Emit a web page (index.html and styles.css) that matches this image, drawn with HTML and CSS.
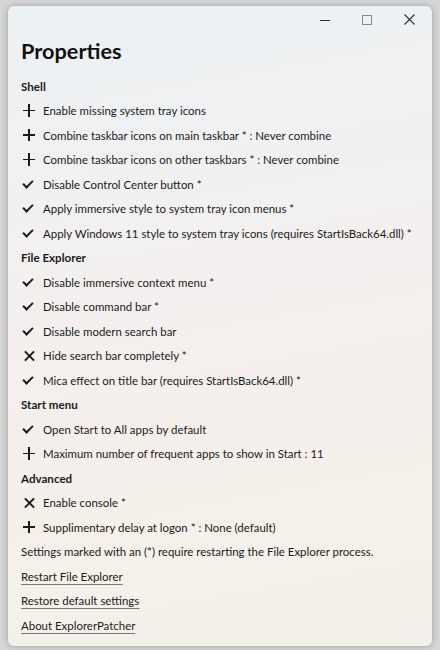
FILE: index.html
```html
<!DOCTYPE html>
<html>
<head>
<meta charset="utf-8">
<link rel="stylesheet" href="styles.css">
</head>
<body>
<div class="window">
  <div class="titlebar">
    <span class="cap"><svg width="10" height="10" viewBox="0 0 10 10"><path d="M0 5.5h10" stroke="#333" stroke-width="1"/></svg></span>
    <span class="cap"><svg width="10" height="10" viewBox="0 0 10 10"><rect x="0.5" y="0.5" width="9" height="9" fill="none" stroke="#888" stroke-width="1"/></svg></span>
    <span class="cap"><svg width="11" height="11" viewBox="0 0 11 11"><path d="M0.5 0.5L10.5 10.5M10.5 0.5L0.5 10.5" stroke="#333" stroke-width="1.1"/></svg></span>
  </div>
  <h1 class="title">Properties</h1>
  <div class="list">
    <div class="row head">Shell</div>
    <div class="row"><span class="ic plus"></span>Enable missing system tray icons</div>
    <div class="row"><span class="ic plus"></span>Combine taskbar icons on main taskbar * : Never combine</div>
    <div class="row"><span class="ic plus"></span>Combine taskbar icons on other taskbars * : Never combine</div>
    <div class="row"><span class="ic check"></span>Disable Control Center button *</div>
    <div class="row"><span class="ic check"></span>Apply immersive style to system tray icon menus *</div>
    <div class="row"><span class="ic check"></span>Apply Windows 11 style to system tray icons (requires StartIsBack64.dll) *</div>
    <div class="row head">File Explorer</div>
    <div class="row"><span class="ic check"></span>Disable immersive context menu *</div>
    <div class="row"><span class="ic check"></span>Disable command bar *</div>
    <div class="row"><span class="ic check"></span>Disable modern search bar</div>
    <div class="row"><span class="ic cross"></span>Hide search bar completely *</div>
    <div class="row"><span class="ic check"></span>Mica effect on title bar (requires StartIsBack64.dll) *</div>
    <div class="row head">Start menu</div>
    <div class="row"><span class="ic check"></span>Open Start to All apps by default</div>
    <div class="row"><span class="ic plus"></span>Maximum number of frequent apps to show in Start : 11</div>
    <div class="row head">Advanced</div>
    <div class="row"><span class="ic cross"></span>Enable console *</div>
    <div class="row"><span class="ic plus"></span>Supplimentary delay at logon * : None (default)</div>
    <div class="row">Settings marked with an (*) require restarting the File Explorer process.</div>
    <div class="row"><a class="link">Restart File Explorer</a></div>
    <div class="row"><a class="link">Restore default settings</a></div>
    <div class="row"><a class="link">About ExplorerPatcher</a></div>
  </div>
</div>
</body>
</html>
```

FILE: styles.css
```css
html, body {
  margin: 0;
  padding: 0;
}
body {
  width: 440px;
  height: 650px;
  background: #d6d6d6;
  font-family: "Lato", "Open Sans", sans-serif;
  color: #1b1b1b;
  overflow: hidden;
}
.window {
  box-sizing: border-box;
  margin: 5px 7px 0 7px;
  height: 642px;
  border: 1px solid #bdbdbd;
  border-radius: 7px;
  background: linear-gradient(170deg, #ecf1f4 0%, #f1f1f2 25%, #f5efee 50%, #f5f0ea 75%, #f3f1eb 100%);
  box-shadow: 0 0 6px rgba(0,0,0,0.18);
  padding: 0 0 0 13px;
}
.titlebar {
  height: 27px;
  display: flex;
  justify-content: flex-end;
  align-items: center;
  padding-right: 2px;
}
.cap {
  width: 42px;
  display: flex;
  justify-content: center;
  align-items: center;
}
.title {
  margin: 0;
  height: 36px;
  line-height: 36px;
  font-size: 21.7px;
  font-weight: 700;
  color: #111;
}
.list {
  margin-top: 5px;
  display: flex;
  flex-direction: column;
}
.row {
  height: 24.5px;
  display: flex;
  align-items: center;
  font-size: 11.45px;
  white-space: nowrap;
}
.head {
  font-weight: 700;
  font-size: 11.6px;
}
.ic {
  width: 16px;
  height: 14px;
  margin-right: 6px;
  position: relative;
  flex: none;
}
.plus::before, .plus::after {
  content: "";
  position: absolute;
  background: #1b1b1b;
}
.plus::before { left: 1.5px; top: 6px; width: 12.5px; height: 1.6px; }
.plus::after { left: 7px; top: 0.5px; width: 1.6px; height: 12.5px; }
.check::before {
  content: "";
  position: absolute;
  left: 3.5px;
  top: 0.5px;
  width: 4px;
  height: 8px;
  border-right: 2.7px solid #1b1b1b;
  border-bottom: 2.7px solid #1b1b1b;
  transform: rotate(45deg);
  transform-origin: center;
}
.cross::before, .cross::after {
  content: "";
  position: absolute;
  left: 1.5px;
  top: 6px;
  width: 13px;
  height: 2px;
  background: #1b1b1b;
}
.cross::before { transform: rotate(45deg); }
.cross::after { transform: rotate(-45deg); }
.link {
  color: #1b1b1b;
  text-decoration: underline;
  text-decoration-color: #777;
  text-underline-offset: 3px;
}
```
